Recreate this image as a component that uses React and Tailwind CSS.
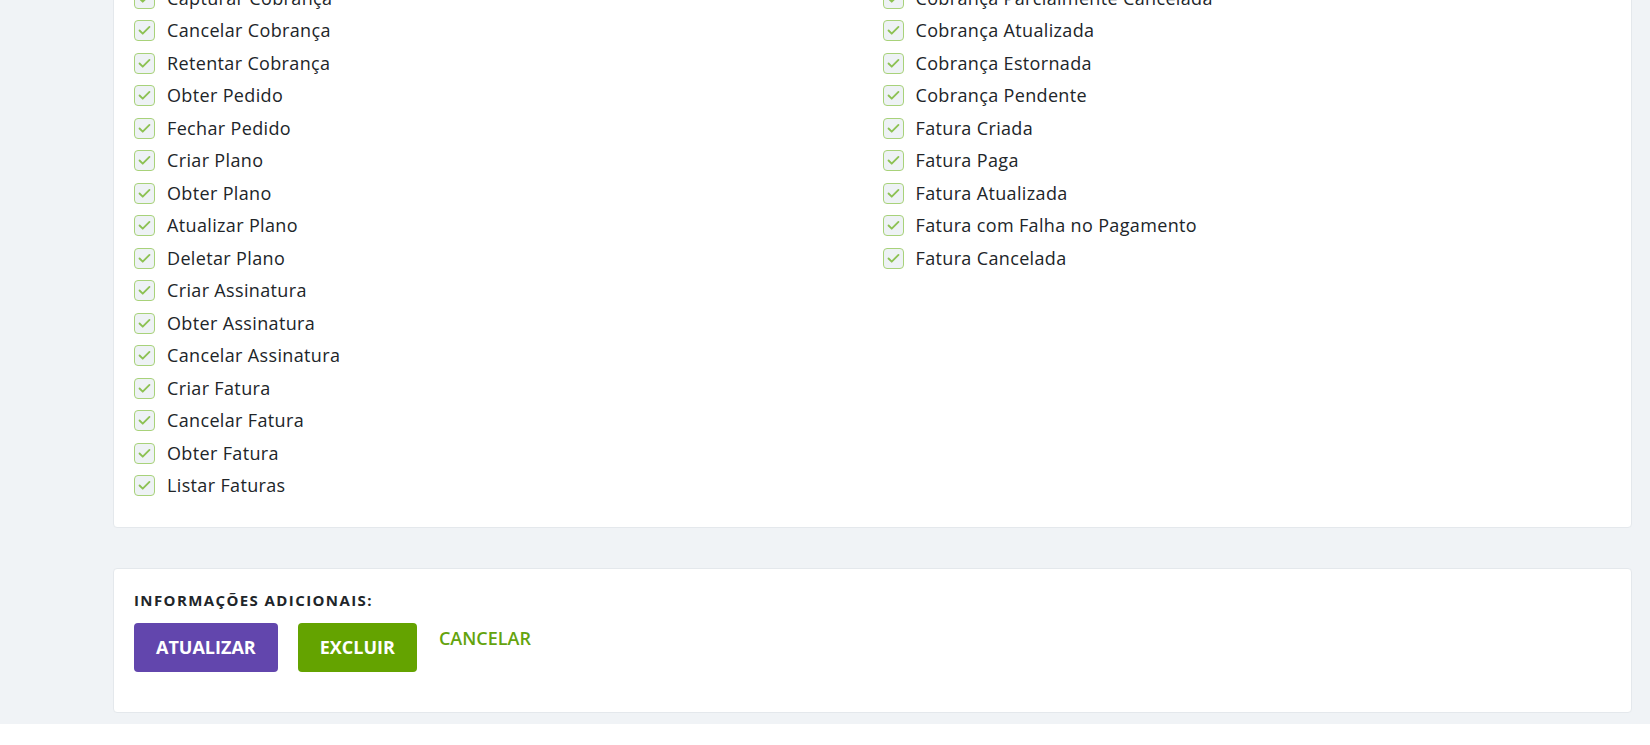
import React from 'react';

const leftItems = [
  'Capturar Cobrança',
  'Cancelar Cobrança',
  'Retentar Cobrança',
  'Obter Pedido',
  'Fechar Pedido',
  'Criar Plano',
  'Obter Plano',
  'Atualizar Plano',
  'Deletar Plano',
  'Criar Assinatura',
  'Obter Assinatura',
  'Cancelar Assinatura',
  'Criar Fatura',
  'Cancelar Fatura',
  'Obter Fatura',
  'Listar Faturas',
];

const rightItems = [
  'Cobrança Parcialmente Cancelada',
  'Cobrança Atualizada',
  'Cobrança Estornada',
  'Cobrança Pendente',
  'Fatura Criada',
  'Fatura Paga',
  'Fatura Atualizada',
  'Fatura com Falha no Pagamento',
  'Fatura Cancelada',
];

// checkbox row, all ticked
const CheckItem = ({ label }) => (
  <label className="flex h-[32.5px] items-center gap-3 cursor-pointer">
    <span className="flex h-[21px] w-[21px] shrink-0 items-center justify-center rounded-[4px] border border-[#a8d27a] bg-[#eef2f5]">
      <svg width="17" height="17" viewBox="0 0 24 24" fill="none" stroke="#8cc152" strokeWidth="2.6" strokeLinecap="round" strokeLinejoin="round">
        <path d="M19 7 9.5 16.5 5 12" />
      </svg>
    </span>
    <span className="text-[18px] leading-[27px] tracking-[0.35px] text-[#212529]">{label}</span>
  </label>
);

const App = () => {
  return (
    <div className="bg-[#f0f3f6] pl-[113px] pr-[18px] pb-[11px] pt-px" style={{ fontFamily: '"Open Sans", "Noto Sans", sans-serif' }}>
      {/* Webhooks card (scrolled, top is off screen) */}
      <div className="-mt-[20px] rounded-[4px] border border-[#e4e8ec] bg-white px-5 pb-[25px]">
        <div className="grid grid-cols-2 gap-x-5">
          <div className="flex flex-col">
            {leftItems.map((item) => (
              <CheckItem key={item} label={item} />
            ))}
          </div>
          <div className="flex flex-col">
            {rightItems.map((item) => (
              <CheckItem key={item} label={item} />
            ))}
          </div>
        </div>
      </div>

      {/* Additional info card */}
      <div className="mt-[40px] rounded-[4px] border border-[#e4e8ec] bg-white px-5 pt-5 pb-[40px]">
        <h3 className="text-[15px] font-bold uppercase leading-[22.5px] tracking-[1.4px] text-[#212529]">
          Informações adicionais:
        </h3>
        <div className="mt-[11px] flex items-start gap-5">
          <button className="rounded-[4px] bg-[#6246ad] px-[22px] py-[11px] text-[18px] font-bold leading-[27px] text-white">
            ATUALIZAR
          </button>
          <button className="rounded-[4px] bg-[#64a300] px-[22px] py-[11px] text-[18px] font-bold leading-[27px] text-white">
            EXCLUIR
          </button>
          <button className="ml-[2px] pt-[2px] text-[18px] font-semibold leading-[27px] text-[#64a30d]">
            CANCELAR
          </button>
        </div>
      </div>
    </div>
  );
};

export default App;
